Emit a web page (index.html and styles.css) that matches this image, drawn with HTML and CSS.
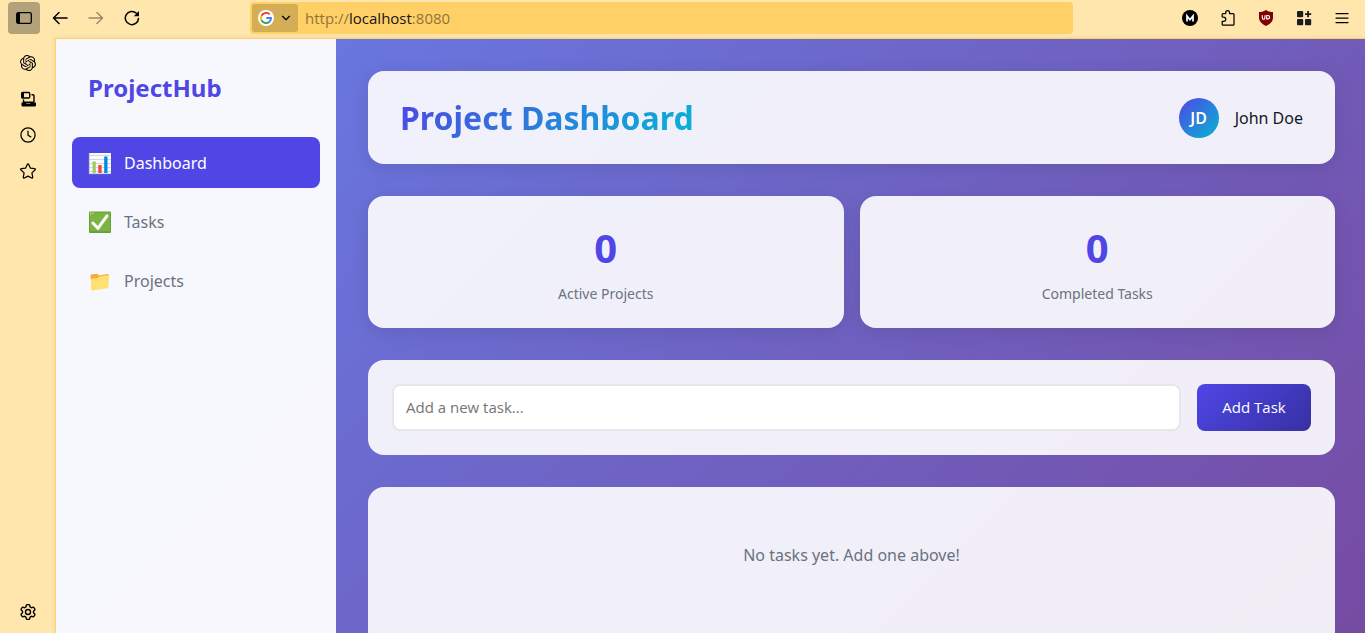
FILE: index.html
```html
<!DOCTYPE html>
<html lang="en">
<head>
<meta charset="utf-8">
<meta name="viewport" content="width=device-width, initial-scale=1">
<title>ProjectHub</title>
<link rel="stylesheet" href="styles.css">
</head>
<body>
<div class="browser">
  <header class="toolbar">
    <div class="toolbar-nav">
      <button class="tool tool-active" aria-label="Sidebar"><svg width="16" height="16" viewBox="0 0 16 16"><rect x="0.700" y="2.700" width="14.600" height="10.600" rx="1.600" fill="none" stroke="#000" stroke-width="1.300"/><path d="M1 2.500H4v11H1z"/></svg></button>
      <button class="tool" aria-label="Back"><svg class="line" width="16" height="16" viewBox="0 0 16 16"><path d="M15 8H1.800M7 2.500 1.500 8 7 13.500"/></svg></button>
      <button class="tool tool-muted" aria-label="Forward"><svg class="line" width="16" height="16" viewBox="0 0 16 16"><path d="M1 8h13.200M9 2.500 14.500 8 9 13.500"/></svg></button>
      <button class="tool" aria-label="Reload"><svg class="line" width="16" height="16" viewBox="0 0 16 16"><path d="M14.500 8.400A6.600 6.600 0 1 1 12.400 3.200"/><path d="M15 1v5.200H9.800z" fill="#000" stroke="none"/></svg></button>
    </div>
    <div class="address">
      <button class="engine" aria-label="Search engine">
        <svg width="16" height="16" viewBox="0 0 16 16"><circle cx="8" cy="8" r="8" fill="#fff"/><g fill="none" stroke-width="2"><path d="M11.700 4.400A5.100 5.100 0 0 0 3.500 5.700" stroke="#ea4335"/><path d="M3.500 5.700a5.100 5.100 0 0 0 0 4.600" stroke="#fbbc05"/><path d="M3.500 10.300a5.100 5.100 0 0 0 8 1.400" stroke="#34a853"/><path d="M11.500 11.700A5.100 5.100 0 0 0 13 8.100H8.200" stroke="#4285f4"/></g></svg>
        <svg class="thin" width="10" height="10" viewBox="0 0 10 10"><path d="m1.500 3.300 3.500 3.400 3.500-3.400"/></svg>
      </button>
      <div class="url">http://<span class="host">localhost</span>:8080</div>
    </div>
    <div class="toolbar-extras">
      <button class="extra" aria-label="Account"><svg width="16" height="16" viewBox="0 0 16 16"><circle cx="8" cy="8" r="8"/><path d="M5 11.400V6L8 9.700 11 6v5.400" fill="none" stroke="#fff" stroke-width="1.700"/></svg></button>
      <button class="extra" aria-label="Extensions"><svg class="thin" width="16" height="16" viewBox="0 0 16 16"><path d="M2.200 6.800V4.500q0-.9.900-.9h2.600V2.600a1.900 1.900 0 0 1 3.800 0v1h3.600q.9 0 .9.900v9.700q0 .9-.9.900h-10q-.9 0-.9-.9v-2.800h1.400a1.900 1.900 0 0 0 0-4.300z"/></svg></button>
      <button class="extra" aria-label="Content blocker"><svg width="16" height="16" viewBox="0 0 16 16"><path d="M8 0c2 1.400 4.300 2.100 7 2v5.500c0 4.200-3.200 6.600-7 8.500-3.800-1.900-7-4.300-7-8.500V2c2.700.1 5-.6 7-2z" fill="#800000"/><path d="M4.300 5.200v2.700a1.200 1.200 0 0 0 2.600 0V5.200M8.700 5.500v3.400h1.200a1.700 1.700 0 0 0 0-3.400z" fill="none" stroke="#fff" stroke-width="1.100"/></svg></button>
      <button class="extra" aria-label="Add-ons"><svg width="16" height="16" viewBox="0 0 16 16" fill="#1c1c22"><rect x="1" y="1" width="6.200" height="6.200" rx="1"/><rect x="1" y="9" width="6.200" height="6.200" rx="1"/><rect x="9" y="9" width="6.200" height="6.200" rx="1"/><path d="M11.200 1h1.800v2.200h2.200V5H13v2.200h-1.800V5H9V3.200h2.200z"/></svg></button>
      <button class="extra" aria-label="Menu"><svg class="thin" width="14" height="16" viewBox="0 0 14 16"><path d="M1 3.500h12M1 8h12M1 12.500h12"/></svg></button>
    </div>
  </header>
  <div class="workspace">
    <nav class="rail" aria-label="Browser tools">
      <button class="rail-button" aria-label="Assistant"><svg width="16" height="16" viewBox="0 0 24 24"><path d="M22.282 9.821a5.985 5.985 0 0 0-.516-4.910 6.046 6.046 0 0 0-6.510-2.900A6.065 6.065 0 0 0 4.981 4.182a5.985 5.985 0 0 0-3.998 2.900 6.046 6.046 0 0 0 .743 7.097 5.980 5.980 0 0 0 .511 4.911 6.051 6.051 0 0 0 6.515 2.900A5.985 5.985 0 0 0 13.260 24a6.056 6.056 0 0 0 5.772-4.206 5.990 5.990 0 0 0 3.998-2.900 6.056 6.056 0 0 0-.748-7.073zM13.260 22.430a4.476 4.476 0 0 1-2.876-1.041l.141-.080 4.779-2.758a.795.795 0 0 0 .393-.681v-6.737l2.020 1.169a.071.071 0 0 1 .038.052v5.583a4.504 4.504 0 0 1-4.495 4.493zM3.600 18.304a4.471 4.471 0 0 1-.535-3.014l.142.085 4.783 2.759a.771.771 0 0 0 .780 0l5.843-3.369v2.332a.080.080 0 0 1-.033.062L9.740 19.950a4.499 4.499 0 0 1-6.140-1.646zM2.341 7.896a4.485 4.485 0 0 1 2.366-1.973V11.600a.766.766 0 0 0 .388.677l5.815 3.355-2.020 1.168a.076.076 0 0 1-.071 0l-4.830-2.787A4.504 4.504 0 0 1 2.341 7.872zm16.597 3.855-5.833-3.387L15.119 7.200a.076.076 0 0 1 .071 0l4.830 2.791a4.494 4.494 0 0 1-.676 8.105v-5.678a.790.790 0 0 0-.407-.667zm2.010-3.023-.141-.085-4.774-2.782a.776.776 0 0 0-.785 0L9.409 9.230V6.897a.066.066 0 0 1 .028-.061l4.830-2.787a4.499 4.499 0 0 1 6.680 4.660zM8.307 12.863l-2.020-1.164a.080.080 0 0 1-.038-.057V6.075a4.499 4.499 0 0 1 7.375-3.453l-.142.080L8.704 5.460a.795.795 0 0 0-.393.681zm1.097-2.365 2.602-1.500 2.607 1.500v2.999l-2.597 1.500-2.607-1.500z"/></svg></button>
      <button class="rail-button" aria-label="Synced tabs"><svg width="16" height="16" viewBox="0 0 16 16"><rect x="1.700" y="1.500" width="8" height="5.500" rx="1" fill="none" stroke="#000" stroke-width="1.400"/><path d="M1.500 1.500H4V7H1.500z"/><path d="M11.500 3.700H13q1 0 1 1v6.600M3.500 8.500v2.800h10.200" fill="none" stroke="#000" stroke-width="1.400"/><path d="M1.500 11.500h4.800v1.100h4.200v-1.100H16v2.800q0 1.200-1.200 1.200H2.700q-1.200 0-1.200-1.200z"/></svg></button>
      <button class="rail-button" aria-label="History"><svg class="thin" width="16" height="16" viewBox="0 0 16 16"><circle cx="8" cy="8" r="7.100"/><path d="M8 4v4.300l2.800 1.600"/></svg></button>
      <button class="rail-button" aria-label="Bookmarks"><svg class="thin" width="16" height="16" viewBox="0 0 16 16"><path d="M7.300 1.400q.7-1.200 1.400 0l1.700 3.700 4.200.6q1.200.3.400 1.300l-3.100 2.900.8 4.300q0 1.300-1.100.8L8 13.100 4.400 15q-1.100.5-1.100-.8l.8-4.300L1 7q-.8-1 .4-1.300l4.200-.6z"/></svg></button>
      <button class="rail-button rail-settings" aria-label="Settings"><svg class="thin" width="16" height="16" viewBox="0.700 0.700 14.600 14.600"><circle cx="8" cy="8" r="2.300"/><path d="M6.600 1.500q1.400-.4 2.800 0l.5 1.900 1.200.7 1.900-.5q1.200.9 1.400 2.400L13 7.400v1.200l1.400 1.400q-.2 1.500-1.400 2.400l-1.900-.5-1.200.7-.5 1.900q-1.400.4-2.800 0l-.5-1.900-1.200-.7-1.900.5Q1.800 11.500 1.600 10L3 8.600V7.400L1.600 6q.2-1.500 1.400-2.400l1.900.5 1.200-.7z"/></svg></button>
    </nav>
    <div class="app">
      <aside class="sidebar">
        <div class="logo">ProjectHub</div>
        <nav class="menu" aria-label="Main">
          <a class="menu-item menu-item-active" href="#dashboard"><svg width="24" height="24" viewBox="0 0 24 24"><path d="M1 2h22v21H1z" fill="#fafafa"/><path d="M1 4.500h22M1 8.500h22M1 12.500h22M1 16.500h22M1 20.500h22" stroke="#cfd8dc"/><path d="M1.300 2v20.700H23" fill="none" stroke="#b0bec5" stroke-width=".8"/><path d="M4.500 10.500h3.300V22H4.500z" fill="#9ccc65"/><path d="M10.300 14h3.300v8h-3.300z" fill="#f44336"/><path d="M16.200 5.500h3.300V22h-3.300z" fill="#0288e8"/></svg>Dashboard</a>
          <a class="menu-item" href="#tasks"><svg width="24" height="24" viewBox="0 0 24 24"><rect x="1" y="1.500" width="22" height="21.500" rx="1" fill="#689f38"/><path d="M2 2.500h20v18.700H2z" fill="#7cb342"/><path d="M2.500 5.500V3H6" fill="none" stroke="#aed581"/><path d="M4.900 13 9.900 18.300 19 5.900" fill="none" stroke="#fff" stroke-width="3" stroke-linecap="round" stroke-linejoin="round"/></svg>Tasks</a>
          <a class="menu-item" href="#projects"><svg width="24" height="24" viewBox="0 0 24 24"><path d="M2.500 6.400q0-.7.8-.8l5.900-.8q.6-.1.800.5l.5 1.200 9.200-1.400q1-.1 1 .8v4L3.300 17z" fill="#f9a83a"/><path d="M3 10.700q0-.8.800-.9l5.700-.8 1.900-1.500 8.700-1.200q.9-.1.900.7l-.6 11.200q-.1.900-1 1L4.300 21.500q-1 .1-1.100-.9-.4-5-.2-9.900z" fill="#ffe070"/></svg>Projects</a>
        </nav>
      </aside>
      <main class="main">
        <section class="card raised page-head">
          <h1 class="title">Project Dashboard</h1>
          <div class="user"><div class="avatar">JD</div><span>John Doe</span></div>
        </section>
        <section class="stats">
          <div class="card raised stat"><div class="stat-value">0</div><div class="stat-label">Active Projects</div></div>
          <div class="card raised stat"><div class="stat-value">0</div><div class="stat-label">Completed Tasks</div></div>
        </section>
        <form class="card task-form">
          <input class="task-input" type="text" placeholder="Add a new task..." aria-label="New task">
          <button class="task-add" type="button">Add Task</button>
        </form>
        <section class="card task-list"><p class="empty">No tasks yet. Add one above!</p></section>
      </main>
    </div>
  </div>
</div>
</body>
</html>
```
FILE: styles.css
```css
* {
  box-sizing: border-box;
}

body {
  margin: 0;
  font-family: "Noto Sans", "Open Sans", sans-serif;
  font-size: 16px;
  line-height: 24px;
  color: #111827;
}

button {
  border: 0;
  padding: 0;
  background: none;
  font: inherit;
}

svg {
  display: block;
  flex-shrink: 0;
}

.line,
.thin {
  fill: none;
  stroke: #000;
  stroke-width: 1.5;
  stroke-linecap: round;
  stroke-linejoin: round;
}

.thin {
  stroke-width: 1.25;
}

.browser {
  display: flex;
  flex-direction: column;
  height: 100vh;
  overflow: hidden;
  background: #ffe6ac;
}

.toolbar {
  display: grid;
  grid-template-columns: 242px minmax(0, 1fr) 277px;
  align-items: center;
  padding: 2px 7px 4px 8px;
}

.toolbar-nav {
  display: flex;
  gap: 4px;
}

.tool {
  display: grid;
  place-items: center;
  width: 32px;
  height: 32px;
  border-radius: 4px;
}

.tool-active {
  background: #b3a179;
}

.tool-muted {
  opacity: 0.4;
}

.address {
  display: flex;
  align-items: center;
  gap: 7px;
  margin-right: 8px;
  padding: 2px;
  border-radius: 4px;
  background: #ffd066;
}

.engine {
  display: flex;
  align-items: center;
  justify-content: center;
  gap: 7px;
  width: 46px;
  height: 28px;
  padding-right: 1px;
  border-radius: 3px;
  background: #d4ae56;
}

.url {
  font-family: "Open Sans", "Noto Sans", sans-serif;
  font-size: 15px;
  color: #8f7439;
}

.host {
  color: #15141a;
}

.toolbar-extras {
  display: flex;
  justify-content: flex-end;
  gap: 6px;
}

.extra {
  display: grid;
  place-items: center;
  width: 32px;
  height: 32px;
}

.workspace {
  display: flex;
  flex: 1;
  min-height: 0;
}

.rail {
  display: flex;
  flex-direction: column;
  align-items: center;
  gap: 4px;
  width: 55px;
  padding: 9px 0 5px;
}

.rail-button {
  display: grid;
  place-items: center;
  width: 32px;
  height: 32px;
}

.rail-settings {
  margin-top: auto;
}

.app {
  display: flex;
  flex: 1;
  min-width: 0;
  border-top: 1px solid #ffd066;
  border-left: 1px solid #ffd066;
  background: linear-gradient(135deg, #667eea 0%, #764ba2 100%);
  box-shadow: 0 0 4px rgba(120, 80, 0, 0.1);
}

.sidebar {
  flex: 0 0 280px;
  padding: 32px 16px;
  background: rgba(255, 255, 255, 0.95);
}

.logo {
  padding: 0 16px;
  margin-bottom: 32px;
  font-size: 24px;
  line-height: 34px;
  font-weight: 700;
  color: #4f46e5;
}

.menu {
  display: flex;
  flex-direction: column;
  gap: 8px;
}

.menu-item {
  display: flex;
  align-items: center;
  gap: 12px;
  height: 51px;
  padding: 0 16px;
  border-radius: 8px;
  color: #6b7280;
  text-decoration: none;
}

.menu-item-active {
  background: #4f46e5;
  color: #fff;
}

.main {
  display: flex;
  flex: 1;
  flex-direction: column;
  gap: 32px;
  min-width: 0;
  padding: 32px 30px 0 32px;
  overflow: hidden;
}

.card {
  flex-shrink: 0;
  border-radius: 16px;
  background: rgba(255, 255, 255, 0.9);
}

.raised {
  box-shadow: 0 4px 20px rgba(0, 0, 0, 0.1);
}

.page-head {
  display: flex;
  align-items: center;
  justify-content: space-between;
  padding: 24px 32px;
}

.title {
  margin: 0;
  font-size: 32px;
  line-height: 45px;
  font-weight: 700;
  background: linear-gradient(135deg, #4f46e5, #06b6d4);
  background-clip: text;
  -webkit-background-clip: text;
  color: transparent;
}

.user {
  display: flex;
  align-items: center;
  gap: 16px;
}

.avatar {
  display: grid;
  place-items: center;
  width: 40px;
  height: 40px;
  border-radius: 50%;
  background: linear-gradient(135deg, #4f46e5, #06b6d4);
  color: #fff;
  font-weight: 600;
}

.stats {
  display: grid;
  flex-shrink: 0;
  grid-template-columns: 1fr 1fr;
  gap: 16px;
}

.stat {
  padding: 24px;
  text-align: center;
}

.stat-value {
  margin-bottom: 8px;
  font-size: 40px;
  line-height: 56px;
  font-weight: 700;
  color: #4f46e5;
}

.stat-label {
  font-size: 14px;
  line-height: 20px;
  color: #6b7280;
}

.task-form {
  display: flex;
  gap: 16px;
  padding: 24px;
}

.task-input {
  flex: 1;
  min-width: 0;
  height: 47px;
  padding: 0 12px 2px;
  border: 2px solid #e5e7eb;
  border-radius: 8px;
  background: #fff;
  font-family: "Open Sans", "Noto Sans", sans-serif;
  font-size: 15px;
}

.task-input::placeholder {
  color: #757575;
}

.task-add {
  flex: 0 0 114px;
  padding-bottom: 2px;
  border-radius: 8px;
  background: linear-gradient(135deg, #4f46e5, #3730a3);
  color: #fff;
  font-family: "Open Sans", "Noto Sans", sans-serif;
  font-size: 15px;
  font-weight: 500;
}

.task-list {
  min-height: 160px;
  padding: 56px 24px;
  text-align: center;
}

.empty {
  margin: 0;
  color: #6b7280;
}
```
